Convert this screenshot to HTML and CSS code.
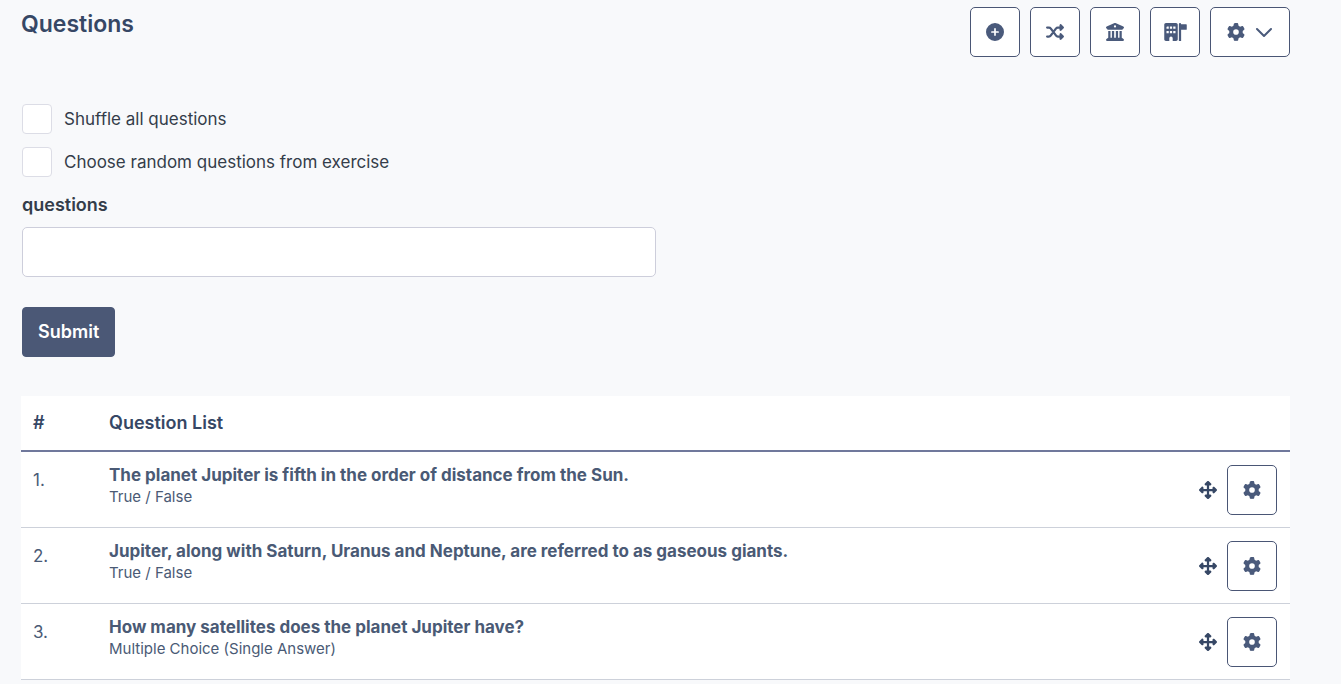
FILE: index.html
```
<!DOCTYPE html>
<html lang="en">
<head>
  <meta charset="UTF-8">
  <title>Questions</title>
  <meta name="viewport" content="width=device-width, initial-scale=1.0">
  <link rel="stylesheet" href="styles.css">
</head>
<body>

  <!-- Shared icons -->
  <svg class="sprite" aria-hidden="true">
    <symbol id="icon-gear" viewBox="0 0 512 512">
      <path d="M495.9 166.6c3.2 8.7 .5 18.4-6.4 24.6l-43.3 39.4c1.1 8.3 1.7 16.8 1.7 25.4s-.6 17.1-1.7 25.4l43.3 39.4c6.9 6.2 9.6 15.9 6.4 24.6c-4.4 11.9-9.7 23.3-15.8 34.3l-4.7 8.1c-6.6 11-14 21.4-22.1 31.2c-5.9 7.2-15.7 9.6-24.5 6.8l-55.7-17.7c-13.4 10.3-28.2 18.9-44 25.4l-12.5 57.1c-2 9.1-9 16.3-18.2 17.8c-13.8 2.3-28 3.5-42.5 3.5s-28.7-1.2-42.5-3.5c-9.2-1.5-16.2-8.7-18.2-17.8l-12.5-57.1c-15.8-6.5-30.6-15.1-44-25.4L83.1 425.9c-8.8 2.8-18.6 .3-24.5-6.8c-8.1-9.8-15.5-20.2-22.1-31.2l-4.7-8.1c-6.1-11-11.4-22.4-15.8-34.3c-3.2-8.7-.5-18.4 6.4-24.6l43.3-39.4C64.6 273.1 64 264.6 64 256s.6-17.1 1.7-25.4L22.4 191.2c-6.9-6.2-9.6-15.9-6.4-24.6c4.4-11.9 9.7-23.3 15.8-34.3l4.7-8.1c6.6-11 14-21.4 22.1-31.2c5.9-7.2 15.7-9.6 24.5-6.8l55.7 17.7c13.4-10.3 28.2-18.9 44-25.4l12.5-57.1c2-9.1 9-16.3 18.2-17.8C227.3 1.2 241.5 0 256 0s28.7 1.2 42.5 3.5c9.2 1.5 16.2 8.7 18.2 17.8l12.5 57.1c15.8 6.5 30.6 15.1 44 25.4l55.7-17.7c8.8-2.8 18.6-.3 24.5 6.8c8.1 9.8 15.5 20.2 22.1 31.2l4.7 8.1c6.1 11 11.4 22.4 15.8 34.3zM256 336a80 80 0 1 0 0-160 80 80 0 1 0 0 160z"/>
    </symbol>
    <symbol id="icon-move" viewBox="0 0 512 512">
      <path d="M278.6 9.4c-12.5-12.5-32.8-12.5-45.3 0l-64 64c-9.2 9.2-11.9 22.9-6.9 34.9s16.6 19.8 29.6 19.8h32v96H128V192c0-12.9-7.8-24.6-19.8-29.6s-25.7-2.2-34.9 6.9l-64 64c-12.5 12.5-12.5 32.8 0 45.3l64 64c9.2 9.2 22.9 11.9 34.9 6.9s19.8-16.6 19.8-29.6V288h96v96H192c-12.9 0-24.6 7.8-29.6 19.8s-2.2 25.7 6.9 34.9l64 64c12.5 12.5 32.8 12.5 45.3 0l64-64c9.2-9.2 11.9-22.9 6.9-34.9s-16.6-19.8-29.6-19.8H288V288h96v32c0 12.9 7.8 24.6 19.8 29.6s25.7 2.2 34.9-6.9l64-64c12.5-12.5 12.5-32.8 0-45.3l-64-64c-9.2-9.2-22.9-11.9-34.9-6.9s-19.8 16.6-19.8 29.6v32H288V128h32c12.9 0 24.6-7.8 29.6-19.8s2.2-25.7-6.9-34.9l-64-64z"/>
    </symbol>
  </svg>

  <header class="page-header">
    <h1>Questions</h1>
    <div class="toolbar">
      <button type="button" class="icon-btn" aria-label="Add question">
        <svg class="icon" viewBox="0 0 512 512"><path fill-rule="evenodd" d="M256 512A256 256 0 1 0 256 0a256 256 0 1 0 0 512zM232 344V280H168a24 24 0 0 1 0-48h64V168a24 24 0 0 1 48 0v64h64a24 24 0 0 1 0 48H280v64a24 24 0 0 1-48 0z"/></svg>
      </button>
      <button type="button" class="icon-btn" aria-label="Shuffle">
        <svg class="icon" viewBox="0 0 512 512">
          <path class="line" d="M32 128h50c20 0 39 9 51 26l154 204c12 17 31 26 51 26h78M32 384h50c20 0 39-9 51-26l48-64M239 218l48-64c12-17 31-26 51-26h78"/>
          <path d="M403 34c12-5 26-2 35 7l64 64c13 13 13 33 0 46l-64 64c-9 9-23 12-35 7s-19-17-19-30V64c0-13 7-25 19-30zM403 290c12-5 26-2 35 7l64 64c13 13 13 33 0 46l-64 64c-9 9-23 12-35 7s-19-17-19-30V320c0-13 7-25 19-30z"/>
        </svg>
      </button>
      <button type="button" class="icon-btn" aria-label="Question bank">
        <svg class="icon" viewBox="0 0 512 512"><path d="M243.4 2.6l-224 96c-14 6-21.8 21-18.7 35.8S16.8 160 32 160v8c0 13.3 10.7 24 24 24H456c13.3 0 24-10.7 24-24v-8c15.2 0 28.3-10.7 31.3-25.6s-4.8-29.9-18.7-35.8l-224-96c-8-3.4-17.2-3.4-25.2 0zM128 224H64V420.3c-.6 .3-1.2 .7-1.8 1.1l-48 32c-11.7 7.8-17 22.4-12.9 35.9S17.9 512 32 512H480c14.1 0 26.5-9.2 30.6-22.7s-1.1-28.1-12.9-35.9l-48-32c-.6-.4-1.2-.7-1.8-1.1V224H384V416H344V224H280V416H232V224H168V416H128V224zM256 64a32 32 0 1 1 0 64 32 32 0 1 1 0-64z"/></svg>
      </button>
      <button type="button" class="icon-btn" aria-label="Course questions">
        <svg class="icon icon-wide" viewBox="0 0 640 512"><path fill-rule="evenodd" d="M48 0h288c26 0 48 22 48 48v416c0 26-22 48-48 48h-96v-80a48 48 0 0 0-96 0v80H48c-26 0-48-22-48-48V48C0 22 22 0 48 0zM64 112v48h64v-64H80zM160 96v64h64V96zM256 96v64h64V96zM64 224v64h64v-64zM160 224v64h64v-64zM256 224v64h64v-64zM448 0a32 32 0 0 1 32 32h144c9 0 16 7 16 16v128c0 9-7 16-16 16H480v320h-64V32a32 32 0 0 1 32-32z"/></svg>
      </button>
      <button type="button" class="icon-btn menu-btn" aria-label="Settings">
        <svg class="icon"><use href="#icon-gear"/></svg>
        <svg class="icon chevron" viewBox="0 0 18 18"><path d="M2 6l7 7 7-7"/></svg>
      </button>
    </div>
  </header>

  <form class="settings-form">
    <div class="check-row">
      <input type="checkbox" id="shuffle">
      <label for="shuffle">Shuffle all questions</label>
    </div>
    <div class="check-row">
      <input type="checkbox" id="random">
      <label for="random">Choose random questions from exercise</label>
    </div>
    <label class="field-label" for="amount">questions</label>
    <input type="text" class="field" id="amount" name="amount">
    <button type="submit" class="submit-btn">Submit</button>
  </form>

  <table class="question-table">
    <thead>
      <tr>
        <th class="col-number">#</th>
        <th colspan="2">Question List</th>
      </tr>
    </thead>
    <tbody>
      <tr>
        <td class="col-number">1.</td>
        <td>
          <a href="#" class="question">The planet Jupiter is fifth in the order of distance from the Sun.</a>
          <div class="type">True / False</div>
        </td>
        <td class="col-actions">
          <div class="actions">
            <button type="button" class="move-btn" aria-label="Move"><svg class="icon"><use href="#icon-move"/></svg></button>
            <button type="button" class="icon-btn" aria-label="Options"><svg class="icon"><use href="#icon-gear"/></svg></button>
          </div>
        </td>
      </tr>
      <tr>
        <td class="col-number">2.</td>
        <td>
          <a href="#" class="question">Jupiter, along with Saturn, Uranus and Neptune, are referred to as gaseous giants.</a>
          <div class="type">True / False</div>
        </td>
        <td class="col-actions">
          <div class="actions">
            <button type="button" class="move-btn" aria-label="Move"><svg class="icon"><use href="#icon-move"/></svg></button>
            <button type="button" class="icon-btn" aria-label="Options"><svg class="icon"><use href="#icon-gear"/></svg></button>
          </div>
        </td>
      </tr>
      <tr>
        <td class="col-number">3.</td>
        <td>
          <a href="#" class="question">How many satellites does the planet Jupiter have?</a>
          <div class="type">Multiple Choice (Single Answer)</div>
        </td>
        <td class="col-actions">
          <div class="actions">
            <button type="button" class="move-btn" aria-label="Move"><svg class="icon"><use href="#icon-move"/></svg></button>
            <button type="button" class="icon-btn" aria-label="Options"><svg class="icon"><use href="#icon-gear"/></svg></button>
          </div>
        </td>
      </tr>
    </tbody>
  </table>

</body>
</html>
```
FILE: styles.css
```
* {
  box-sizing: border-box;
}

body {
  margin: 0;
  padding: 7px 51px 0 21px;
  background-color: #f8f9fb;
  color: #343d4a;
  font-family: Inter, "Open Sans", sans-serif;
  font-size: 17px;
  line-height: 30px;
}

button,
input {
  font: inherit;
}

button {
  cursor: pointer;
}

.sprite {
  display: none;
}

.page-header {
  display: flex;
  justify-content: space-between;
  align-items: flex-start;
  margin-bottom: 47px;
}

h1 {
  margin: 0;
  color: #364765;
  font-size: 23px;
  font-weight: 600;
  line-height: 34px;
}

.toolbar {
  display: flex;
  gap: 10px;
}

.icon {
  display: block;
  width: 18px;
  height: 18px;
  fill: currentColor;
}

.icon-wide {
  width: 23px;
  flex-shrink: 0;
}

.icon .line {
  fill: none;
  stroke: currentColor;
  stroke-width: 64;
  stroke-linecap: round;
}

.icon-btn {
  display: flex;
  justify-content: center;
  align-items: center;
  width: 50px;
  height: 50px;
  padding: 0;
  background-color: #fff;
  border: 1px solid #4a5675;
  border-radius: 5px;
  color: #4a5a7b;
}

.menu-btn {
  gap: 10px;
  width: 80px;
}

.chevron {
  fill: none;
  stroke: currentColor;
  stroke-width: 2;
  stroke-linecap: round;
  stroke-linejoin: round;
}

.settings-form {
  padding: 0 1px;
  margin-bottom: 39px;
}

.check-row {
  display: flex;
  align-items: center;
  gap: 12px;
  margin-bottom: 13px;
}

.check-row input {
  appearance: none;
  width: 30px;
  height: 30px;
  margin: 0;
  background-color: #fff;
  border: 1px solid #dcdde6;
  border-radius: 4px;
}

.check-row input:checked {
  background-color: #4b5876;
}

.field-label {
  display: block;
  margin-bottom: 7px;
  font-size: 18px;
  font-weight: 600;
}

.field {
  display: block;
  width: 50%;
  height: 50px;
  padding: 0 15px;
  margin-bottom: 30px;
  background-color: #fff;
  border: 1px solid #cdcedb;
  border-radius: 5px;
}

.submit-btn {
  display: block;
  height: 50px;
  padding: 0 15px;
  background-color: #4b5876;
  border: 1px solid #4b5876;
  border-radius: 4px;
  color: #fff;
  font-size: 18px;
  font-weight: 600;
}

.question-table {
  width: 100%;
  background-color: #fff;
  border-spacing: 0;
  color: #4a5a75;
}

.question-table th,
.question-table td {
  padding: 13px 13px 12px 12px;
  text-align: left;
  vertical-align: top;
}

.question-table th {
  padding: 12px;
  border-bottom: 2px solid #70789c;
  color: #364765;
  font-size: 18px;
  font-weight: 600;
}

.question-table td {
  border-bottom: 1px solid #cdd1da;
}

.col-number {
  width: 76px;
}

.col-actions {
  width: 104px;
}

.actions {
  display: flex;
  justify-content: flex-end;
  align-items: center;
  gap: 10px;
}

.move-btn {
  padding: 0;
  background: none;
  border: none;
  color: #364765;
}

.question {
  display: block;
  color: #4a5a75;
  font-weight: 700;
  line-height: 21px;
  text-decoration: none;
}

.type {
  color: #4a5a75;
  font-size: 15px;
  line-height: 21px;
}
```
